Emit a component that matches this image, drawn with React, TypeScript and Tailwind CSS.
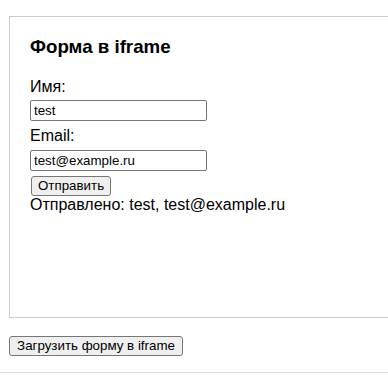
import React from 'react';

const field =
  'block w-[177px] h-[21px] border border-[#767676] rounded-[2px] px-[3px] text-[13.33px] leading-none text-black bg-white outline-none';
const btn =
  'block h-[20px] border border-[#767676] rounded-[3px] bg-[#efefef] px-[6px] text-[13.33px] leading-none text-black';

const FramedForm: React.FC = () => (
  <div className="ml-[9px] mt-4 w-[420px] h-[302px] shrink-0 border border-[#cccccc] pl-[20px] pt-[19px]">
    <h3 className="text-[18.72px] leading-[22px] font-bold">Форма в iframe</h3>
    <label className="block mt-[20px] text-[16px] leading-[18px]">Имя:</label>
    <input className={`${field} mt-[4px]`} defaultValue="test" readOnly />
    <label className="block mt-[6px] text-[16px] leading-[18px]">Email:</label>
    <input className={`${field} mt-[5px]`} defaultValue="test@example.ru" readOnly />
    <button className={`${btn} mt-[5px] ml-px w-[80px]`}>Отправить</button>
    <p className="text-[16px] leading-[18px]">Отправлено: test, test@example.ru</p>
  </div>
);

export default function App() {
  return (
    <div className="w-[388px] h-[375px] overflow-hidden bg-white text-black font-['Liberation_Sans',Arial,sans-serif]">
      <FramedForm />
      <button className={`${btn} mt-[18px] ml-[9px] w-[174px]`}>Загрузить форму в iframe</button>
      <div className="mt-[16px] border-t border-[#dddddd]" />
    </div>
  );
}
